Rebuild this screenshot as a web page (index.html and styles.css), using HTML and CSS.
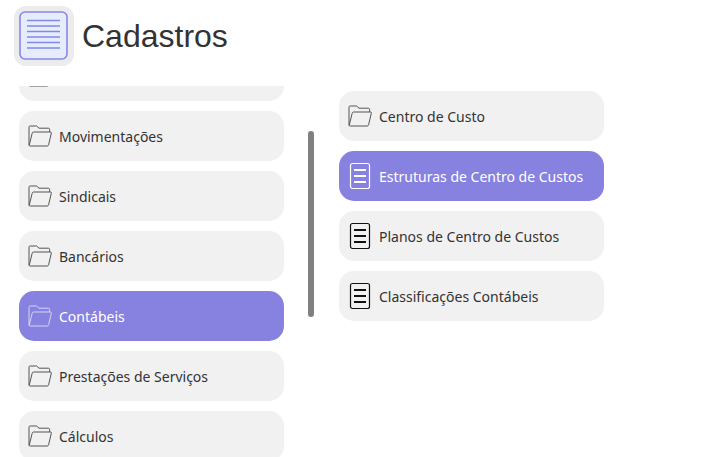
FILE: index.html
```html
<!DOCTYPE html>
<html lang="pt-BR">
<head>
<meta charset="utf-8">
<title>Cadastros</title>
<link rel="stylesheet" href="styles.css">
</head>
<body>
<svg class="defs" width="0" height="0" aria-hidden="true">
  <symbol id="folder" viewBox="0 0 24 22">
    <path d="M1 20.3V2.2Q1 1 2.2 1H8.6L11 3.2H20.4Q21.6 3.2 21.6 4.4V7M1.2 20.4L4.2 8.2Q4.5 7 5.6 7H22.4Q23.6 7 23.3 8.2L20.6 19.8Q20.3 21 19.2 21H2.2Q1 21 1.2 20.4Z" fill="none" stroke="currentColor" stroke-width="1"/>
  </symbol>
  <symbol id="doc" viewBox="0 0 22 28">
    <rect x="1.5" y="1.5" width="19" height="25" rx="2" fill="none" stroke="currentColor" stroke-width="1.2"/>
    <path d="M5 8H17M5 14H17M5 20H17" fill="none" stroke="currentColor" stroke-width="2"/>
  </symbol>
</svg>
<header class="top">
  <div class="logo">
    <svg class="logo-svg" viewBox="0 0 50 50" aria-hidden="true">
      <rect x="1" y="1" width="47" height="47" rx="5" fill="#e6ecfb" stroke="#8a86e8" stroke-width="1.6"/>
      <path d="M8 9.5H41M8 15H41M8 20.500H41M8 26H41M8 31.500H41M8 37H41" stroke="#7f8ae6" stroke-width="1.500"/>
    </svg>
  </div>
  <h1 class="title">Cadastros</h1>
</header>
<main class="panels">
  <nav class="left">
    <ul class="list shifted">
      <li class="item"><svg class="ic-folder"><use href="#folder"/></svg><span>Gerais</span></li>
      <li class="item"><svg class="ic-folder"><use href="#folder"/></svg><span>Movimentações</span></li>
      <li class="item"><svg class="ic-folder"><use href="#folder"/></svg><span>Sindicais</span></li>
      <li class="item"><svg class="ic-folder"><use href="#folder"/></svg><span>Bancários</span></li>
      <li class="item active"><svg class="ic-folder"><use href="#folder"/></svg><span>Contábeis</span></li>
      <li class="item"><svg class="ic-folder"><use href="#folder"/></svg><span>Prestações de Serviços</span></li>
      <li class="item"><svg class="ic-folder"><use href="#folder"/></svg><span>Cálculos</span></li>
    </ul>
    <div class="thumb"></div>
  </nav>
  <nav class="right">
    <ul class="list">
      <li class="item"><svg class="ic-folder"><use href="#folder"/></svg><span>Centro de Custo</span></li>
      <li class="item active"><svg class="ic-doc"><use href="#doc"/></svg><span>Estruturas de Centro de Custos</span></li>
      <li class="item"><svg class="ic-doc"><use href="#doc"/></svg><span>Planos de Centro de Custos</span></li>
      <li class="item"><svg class="ic-doc"><use href="#doc"/></svg><span>Classificações Contábeis</span></li>
    </ul>
  </nav>
</main>
</body>
</html>
```
FILE: styles.css
```css
* { box-sizing: border-box; }
html, body { margin: 0; height: 100%; overflow: hidden; background: #fff; }
body { font-family: "Noto Sans", sans-serif; color: #333; }
.defs { position: absolute; }
.top { height: 86px; padding: 6px 0 0 14px; display: flex; align-items: flex-start; gap: 8px; }
.logo { width: 60px; height: 60px; border-radius: 12px; background: #ececec; display: flex; align-items: center; justify-content: center; }
.logo-svg { width: 50px; height: 50px; }
.title { margin: 0; font: 400 32px/60px "Liberation Sans", sans-serif; color: #333; }
.panels { display: flex; height: 371px; }
.left { position: relative; width: 320px; height: 371px; overflow: hidden; padding-left: 19px; }
.right { padding: 5px 0 0 19px; }
.list { list-style: none; margin: 0; padding: 0; width: 265px; display: flex; flex-direction: column; gap: 10px; }
.shifted { margin-top: -35px; }
.item { flex: none; height: 50px; border-radius: 15px; background: #f1f1f1; display: flex; align-items: center; padding-left: 9px; font-size: 14px; color: #333; }
.item span { margin-left: 7px; }
.item.active { background: #8782e0; color: #fff; }
.ic-folder { width: 24px; height: 22px; color: #555; }
.ic-doc { width: 22px; height: 28px; margin-left: 1px; margin-right: 1px; color: #111; }
.active .ic-folder { color: #d6d4f6; }
.active .ic-doc { color: #fff; }
.thumb { position: absolute; left: 308px; top: 45px; width: 6px; height: 186px; border-radius: 3px; background: #808080; }
```
